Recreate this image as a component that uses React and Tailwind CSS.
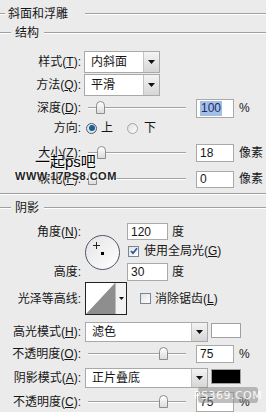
const Label = ({ children, w = "w-[81px]" }) => (
  <span className={`${w} shrink-0 text-right whitespace-nowrap`}>{children}</span>
);

const Arrow = () => (
  <svg width="7" height="4" viewBox="0 0 7 4">
    <path d="M0 0h7L3.5 4z" fill="#111" />
  </svg>
);

const Select = ({ value, w }) => (
  <div className={`flex h-full border border-[#a9a9a9] bg-white ${w}`}>
    <span className="flex-1 flex items-center pl-[6px]">{value}</span>
    <div className="w-[16px] flex items-center justify-center border-l border-[#c4c4c4] bg-gradient-to-b from-[#f4f4f4] to-[#d6d6d6]">
      <Arrow />
    </div>
  </div>
);

const Input = ({ value, selected, w = "w-[38px]", h = "h-[19px]" }) => (
  <div className={`${w} ${h} flex items-center border border-[#a9a9a9] bg-white pl-[3px]`}>
    {selected ? (
      <span className="bg-[#a3bfe6] text-[#1b2b66] leading-[15px] px-[1px]">{value}</span>
    ) : (
      <span>{value}</span>
    )}
  </div>
);

const Slider = ({ thumb }) => (
  <div className="relative w-[98px] h-[14px] ml-[7px] shrink-0">
    <div className="absolute left-0 right-0 top-[6px] border-t border-[#a2a2a2] border-b border-b-white" />
    <div
      className="absolute top-0 w-[9px] h-[13px] rounded-t-full border border-[#8d8d8d] bg-gradient-to-b from-white to-[#dcdcdc]"
      style={{ left: thumb }}
    />
  </div>
);

const Line = ({ className = "" }) => (
  <div className={`h-[2px] border-t border-[#a0a0a0] border-b border-b-white ${className}`} />
);

const Check = ({ checked }) => (
  <div className="w-[11px] h-[11px] border border-[#7a8594] bg-gradient-to-br from-[#e2e2e2] to-white flex items-center justify-center">
    {checked && (
      <svg width="8" height="8" viewBox="0 0 8 8">
        <path d="M1 4.2l2 2L7 1.2" stroke="#2c56a3" strokeWidth="1.8" fill="none" />
      </svg>
    )}
  </div>
);

const Radio = ({ on }) => (
  <div
    className={`w-[11px] h-[11px] rounded-full border flex items-center justify-center ${
      on ? "border-[#4d5d70] bg-[#dfe6ee]" : "border-[#a5a5a5] bg-gradient-to-br from-[#dedede] to-white"
    }`}
  >
    {on && <div className="w-[6px] h-[6px] rounded-full bg-[#1f5f8f]" />}
  </div>
);

export default function App() {
  return (
    <div className="relative w-[266px] h-[412px] overflow-hidden bg-[#ebebeb] text-[12px] leading-none text-[#161616] font-['Liberation_Sans','Noto_Sans_CJK_SC',sans-serif]">
      {/* title */}
      <div className="flex items-center h-[20px] mt-[4px]">
        <Line className="w-[5px]" />
        <span className="ml-[3px]">斜面和浮雕</span>
        <Line className="flex-1 ml-[17px]" />
      </div>
      <div className="flex items-center h-[18px]">
        <Line className="w-[11px]" />
        <span className="ml-[4px]">结构</span>
        <Line className="flex-1 ml-[5px]" />
      </div>

      <div className="flex items-center h-[22px] mt-[9px]">
        <Label>
          样式(<u>T</u>):
        </Label>
        <div className="ml-[3px] h-full">
          <Select value="内斜面" w="w-[76px]" />
        </div>
      </div>
      <div className="flex items-center h-[22px] mt-[1px]">
        <Label>
          方法(<u>Q</u>):
        </Label>
        <div className="ml-[3px] h-full">
          <Select value="平滑" w="w-[76px]" />
        </div>
      </div>
      <div className="flex items-center h-[22px] mt-[1px]">
        <Label>
          深度(<u>D</u>):
        </Label>
        <Slider thumb={8} />
        <div className="ml-[10px]">
          <Input value="100" selected />
        </div>
        <span className="ml-[5px]">%</span>
      </div>
      <div className="flex items-center h-[18px]">
        <Label>方向:</Label>
        <div className="ml-[5px]">
          <Radio on />
        </div>
        <span className="ml-[4px]">上</span>
        <div className="ml-[14px]">
          <Radio />
        </div>
        <span className="ml-[6px]">下</span>
      </div>
      <div className="flex items-center h-[19px] mt-[6px]">
        <Label>
          大小(<u>Z</u>):
        </Label>
        <Slider thumb={9} />
        <div className="ml-[10px]">
          <Input value="18" h="h-[18px]" />
        </div>
        <span className="ml-[5px]">像素</span>
      </div>
      <div className="flex items-center h-[18px] mt-[8px]">
        <Label>
          软化(<u>F</u>):
        </Label>
        <Slider thumb={0} />
        <div className="ml-[10px]">
          <Input value="0" h="h-[17px]" />
        </div>
        <span className="ml-[5px]">像素</span>
      </div>

      <Line className="mt-[5px]" />

      <div className="flex items-center h-[16px] mt-[5px]">
        <Line className="w-[11px]" />
        <span className="ml-[4px]">阴影</span>
        <Line className="flex-1 ml-[5px]" />
      </div>

      {/* angle block */}
      <div className="grid grid-cols-[81px_46px_1fr] grid-rows-[17px_22px_19px] mt-[7px]">
        <div className="flex items-center justify-end">
          角度(<u>N</u>):
        </div>
        <div className="row-span-3 flex items-center">
          <div className="relative ml-[4px] w-[35px] h-[35px] rounded-full border-[1.5px] border-[#4e586c] bg-gradient-to-br from-[#e4e4e4] to-white">
            <div className="absolute left-[15px] top-[16px] w-[3px] h-[3px] bg-black" />
            <div className="absolute left-[10px] top-[6px] w-[1px] h-[7px] bg-[#222]" />
            <div className="absolute left-[7px] top-[9px] w-[7px] h-[1px] bg-[#222]" />
          </div>
        </div>
        <div className="flex items-center">
          <Input value="120" w="w-[41px]" h="h-[17px]" />
          <span className="ml-[4px]">度</span>
        </div>
        <div className="col-start-3 flex items-center">
          <div className="ml-[1px]">
            <Check checked />
          </div>
          <span className="ml-[5px]">
            使用全局光(<u>G</u>)
          </span>
        </div>
        <div className="col-start-1 row-start-3 flex items-center justify-end">高度:</div>
        <div className="col-start-3 row-start-3 flex items-center">
          <Input value="30" w="w-[41px]" h="h-[18px]" />
          <span className="ml-[4px]">度</span>
        </div>
      </div>

      <div className="flex items-center h-[33px] mt-[1px]">
        <Label>光泽等高线:</Label>
        <div className="ml-[4px] flex h-full w-[42px] border border-[#222] bg-white">
          <svg width="29" height="31" viewBox="0 0 29 31" className="shrink-0">
            <path d="M0 31L29 0V31z" fill="#8e8e8e" />
          </svg>
          <div className="flex-1 flex items-center justify-center border-l border-[#bbb] bg-[#f2f2f2]">
            <svg width="5" height="3" viewBox="0 0 5 3">
              <path d="M0 0h5L2.5 3z" fill="#111" />
            </svg>
          </div>
        </div>
        <div className="ml-[13px]">
          <Check />
        </div>
        <span className="ml-[4px]">
          消除锯齿(<u>L</u>)
        </span>
      </div>

      <div className="flex h-[20px] mt-[7px]">
        <Label w="w-[81px] self-center">
          高光模式(<u>H</u>):
        </Label>
        <div className="ml-[4px] h-full">
          <Select value="滤色" w="w-[123px]" />
        </div>
        <div className="ml-[3px] mt-[1px] w-[30px] h-[15px] border border-[#a0a0a0] bg-white" />
      </div>
      <div className="flex items-center h-[18px] mt-[3px]">
        <Label>
          不透明度(<u>O</u>):
        </Label>
        <Slider thumb={71} />
        <div className="ml-[10px]">
          <Input value="75" h="h-[18px]" />
        </div>
        <span className="ml-[5px]">%</span>
      </div>
      <div className="flex h-[20px] mt-[5px]">
        <Label w="w-[81px] self-center">
          阴影模式(<u>A</u>):
        </Label>
        <div className="ml-[4px] h-full">
          <Select value="正片叠底" w="w-[123px]" />
        </div>
        <div className="ml-[3px] mt-[1px] w-[30px] h-[15px] border border-[#a0a0a0] bg-black" />
      </div>
      <div className="flex items-center h-[20px] mt-[4px]">
        <Label>
          不透明度(<u>C</u>):
        </Label>
        <Slider thumb={71} />
        <div className="ml-[10px]">
          <Input value="75" h="h-[20px]" />
        </div>
        <span className="ml-[5px]">%</span>
      </div>

      {/* watermarks over the dialog */}
      <div className="absolute left-[35px] top-[154px] text-[15px] leading-none text-black [text-shadow:0_0_2px_#fff,0_0_2px_#fff]">
        一起ps吧
      </div>
      <div className="absolute left-[15px] top-[171px] text-[11px] leading-none font-bold tracking-[0.5px] text-[#222] [text-shadow:0_0_2px_#fff,0_0_2px_#fff]">
        WWW.17PS8.COM
      </div>
      <div className="absolute left-[198px] top-[387px] w-[60px] h-[16px] rounded-[3px] bg-[#8a8a8a]/55 flex items-center justify-center text-[11px] text-white/90 tracking-[0.5px] font-['DejaVu_Sans',sans-serif]">
        PS369.COM
      </div>
    </div>
  );
}
